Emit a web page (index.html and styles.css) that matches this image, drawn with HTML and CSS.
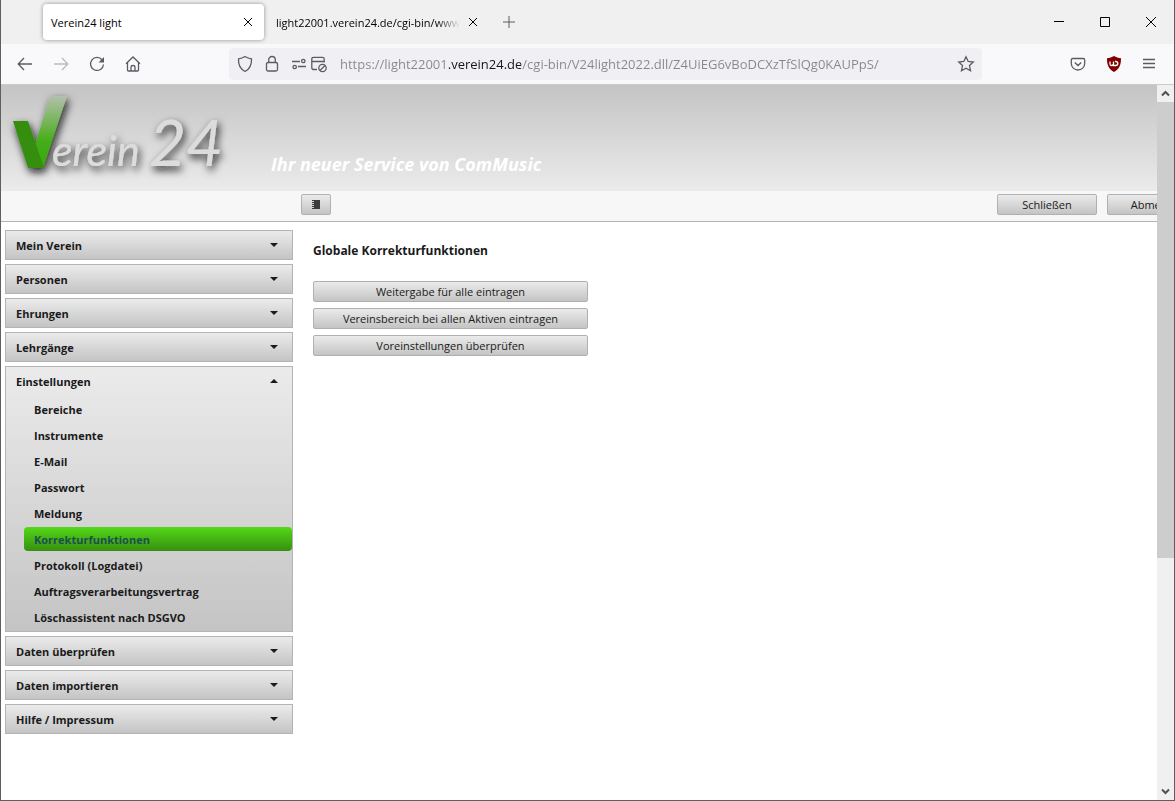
FILE: index.html
```
<!DOCTYPE html>
<html lang="de">
<head>
  <meta charset="UTF-8" />
  <meta name="viewport" content="width=device-width, initial-scale=1.0"/>
  <title>Verein24 light</title>
  <link rel="stylesheet" href="styles.css">
</head>
<body>
<div class="window">

  <div class="tabbar">
    <div class="tab active">
      <span class="tab-title">Verein24 light</span>
      <button class="tab-close" aria-label="Tab schließen"><svg width="10" height="10" viewBox="0 0 10 10"><path d="M1 1l8 8M9 1l-8 8"/></svg></button>
    </div>
    <div class="tab">
      <span class="tab-title fade">light22001.verein24.de/cgi-bin/www</span>
      <button class="tab-close" aria-label="Tab schließen"><svg width="10" height="10" viewBox="0 0 10 10"><path d="M1 1l8 8M9 1l-8 8"/></svg></button>
    </div>
    <button class="tab-new" aria-label="Neuer Tab"><svg width="12" height="12" viewBox="0 0 12 12"><path d="M6 0v12M0 6h12"/></svg></button>
    <div class="window-buttons">
      <button aria-label="Minimieren"><svg width="10" height="10" viewBox="0 0 10 10"><path d="M0 4.500h10"/></svg></button>
      <button aria-label="Maximieren"><svg width="10" height="10" viewBox="0 0 10 10"><path d="M.5.5h9v9h-9z"/></svg></button>
      <button aria-label="Fenster schließen"><svg width="10" height="10" viewBox="0 0 10 10"><path d="M0 0l10 10M10 0L0 10"/></svg></button>
    </div>
  </div>

  <div class="navbar">
    <div class="nav-buttons">
      <button aria-label="Zurück"><svg width="16" height="16" viewBox="0 0 16 16"><path d="M15 8H1.500M7 2L1.200 8 7 14"/></svg></button>
      <button aria-label="Vor" disabled><svg width="16" height="16" viewBox="0 0 16 16"><path d="M1 8h13.500M9 2l5.800 6L9 14"/></svg></button>
      <button aria-label="Neu laden"><svg width="16" height="16" viewBox="0 0 16 16"><path d="M13.200 4A6.500 6.500 0 1 0 14.500 8.500"/><path class="solid" d="M15 1v5.500H9.500z"/></svg></button>
      <button aria-label="Startseite"><svg width="16" height="16" viewBox="0 0 16 16"><path d="M1 7.800L8 1l7 6.800M2.500 6.500V14q0 1 1 1h9q1 0 1-1V6.500M6 15v-4q0-1.500 2-1.500t2 1.500v4"/></svg></button>
    </div>
    <div class="urlbar">
      <svg width="16" height="18" viewBox="0 0 16 18"><path d="M8 1.500C10 2.800 12.300 3.500 14.500 3.800 14.800 9.500 13 14 8 16.500 3 14 1.200 9.500 1.500 3.800 3.700 3.500 6 2.800 8 1.500z"/></svg>
      <svg width="14" height="18" viewBox="0 0 14 18"><rect x="1.500" y="7.500" width="11" height="8.500" rx="1.500"/><path d="M3.700 7.500V4.800a3.300 3.300 0 0 1 6.600 0v2.700"/></svg>
      <span class="url-pair">
        <svg width="16" height="16" viewBox="0 0 16 16"><path d="M1 5.500h8M7 10.500h8"/><circle cx="12.300" cy="5" r="1.700"/><circle cx="3.700" cy="11" r="1.700"/></svg>
        <svg width="18" height="18" viewBox="0 0 18 18"><path d="M7 14.500H3.500q-1.700 0-1.700-1.700V4q0-1.700 1.700-1.700h9q1.700 0 1.700 1.700v3.500M2 6.500h12"/><circle cx="12.500" cy="13" r="3.700"/><path d="M10 15.500l5-5"/></svg>
      </span>
      <input class="url" type="text" aria-label="Adresse" value="https://light22001.verein24.de/cgi-bin/V24light2022.dll/Z4UiEG6vBoDCXzTfSlQg0KAUPpS/">
      <button aria-label="Lesezeichen"><svg width="18" height="18" viewBox="0 0 18 18"><path d="M9 1.800l2.200 4.700 5.100.6-3.800 3.500 1 5.100L9 13.200l-4.500 2.500 1-5.100L1.700 7.100l5.100-.6z"/></svg></button>
    </div>
    <div class="nav-tools">
      <button aria-label="Pocket"><svg width="16" height="16" viewBox="0 0 16 16"><path d="M2.800 2.500h10.400q1.500 0 1.500 1.500v3.500a6.700 6.500 0 0 1-13.400 0V4q0-1.500 1.500-1.500zM4.800 6.500L8 9.500l3.200-3"/></svg></button>
      <button aria-label="uBlock Origin"><svg width="16" height="18" viewBox="0 0 16 18"><path class="shield" d="M8 1c2 1.300 4.500 2 7 2.200 0 6-1 10.300-7 13.800C2 13.500 1 9.200 1 3.200 3.500 3 6 2.300 8 1z"/><path class="shield-mark" d="M4 6.500V9q0 1.500 1.500 1.500T7.500 9V6.500M7.500 7v3.500h2q2.300 0 2.300-2t-2.300-2H9"/></svg></button>
      <button aria-label="Menü"><svg width="14" height="12" viewBox="0 0 14 12"><path d="M1 1.500h12M1 5.500h12M1 9.500h12"/></svg></button>
    </div>
  </div>

  <div class="viewport">
    <div class="page">
      <header class="banner">
        <svg class="logo" width="250" height="106" viewBox="0 0 250 106" role="img" aria-label="Verein 24">
          <defs>
            <linearGradient id="tick" x1="0" y1="0" x2="0" y2="1">
              <stop offset="0" stop-color="#b4bfae"/>
              <stop offset=".65" stop-color="#42ad14"/>
              <stop offset="1" stop-color="#3da60f"/>
            </linearGradient>
            <filter id="shadow" x="-20%" y="-20%" width="140%" height="150%">
              <feDropShadow dx="2" dy="4" stdDeviation="4" flood-color="#111" flood-opacity=".9"/>
            </filter>
          </defs>
          <g class="logo-parts" filter="url(#shadow)">
            <path fill="url(#tick)" d="M49 11h17L42 83H31L34 60z"/>
            <path fill="#348e0e" d="M12 36h15l16 47H27z"/>
            <text class="logo-text" x="51" y="81">erein</text>
            <text class="logo-number" x="148" y="81">24</text>
          </g>
        </svg>
        <p class="slogan">Ihr neuer Service von ComMusic</p>
      </header>

      <div class="toolbar">
        <button class="btn btn-icon" aria-label="Menü ein- und ausblenden"><svg width="10" height="10" viewBox="0 0 10 10"><path d="M3 0h6v9H3zM1 0h2v1H1zM1 2h2v1H1zM1 4h2v1H1zM1 6h2v1H1zM1 8h2v1H1z"/></svg></button>
        <div class="session">
          <button class="btn">Schließen</button>
          <button class="btn">Abmelden</button>
        </div>
      </div>

      <div class="content">
        <nav class="menu">
          <section class="panel"><button class="panel-head">Mein Verein</button></section>
          <section class="panel"><button class="panel-head">Personen</button></section>
          <section class="panel"><button class="panel-head">Ehrungen</button></section>
          <section class="panel"><button class="panel-head">Lehrgänge</button></section>
          <section class="panel open">
            <button class="panel-head">Einstellungen</button>
            <ul>
              <li><a href="#">Bereiche</a></li>
              <li><a href="#">Instrumente</a></li>
              <li><a href="#">E-Mail</a></li>
              <li><a href="#">Passwort</a></li>
              <li><a href="#">Meldung</a></li>
              <li><a href="#" class="selected">Korrekturfunktionen</a></li>
              <li><a href="#">Protokoll (Logdatei)</a></li>
              <li><a href="#">Auftragsverarbeitungsvertrag</a></li>
              <li><a href="#">Löschassistent nach DSGVO</a></li>
            </ul>
          </section>
          <section class="panel"><button class="panel-head">Daten überprüfen</button></section>
          <section class="panel"><button class="panel-head">Daten importieren</button></section>
          <section class="panel"><button class="panel-head">Hilfe / Impressum</button></section>
        </nav>

        <main>
          <h1>Globale Korrekturfunktionen</h1>
          <div class="actions">
            <button class="btn">Weitergabe für alle eintragen</button>
            <button class="btn">Vereinsbereich bei allen Aktiven eintragen</button>
            <button class="btn">Voreinstellungen überprüfen</button>
          </div>
        </main>
      </div>
    </div>

    <div class="scrollbar">
      <span class="arrow"><svg width="9" height="7" viewBox="0 0 9 7"><path d="M1 5.500l3.500-3.500L8 5.500"/></svg></span>
      <div class="track"><div class="thumb"></div></div>
      <span class="arrow"><svg width="9" height="7" viewBox="0 0 9 7"><path d="M1 1.500L4.500 5 8 1.500"/></svg></span>
    </div>
  </div>

</div>
</body>
</html>
```
FILE: styles.css
```
* {
  margin: 0;
  padding: 0;
  box-sizing: border-box;
}

body {
  font-family: 'Segoe UI', 'Open Sans', sans-serif;
  font-size: 11px;
  color: #1a1a1a;
}

button {
  font: inherit;
  color: inherit;
  background: none;
  border: none;
}

svg {
  display: block;
  flex: none;
  fill: none;
  stroke: #5b5b66;
}

.window {
  height: 100vh;
  display: flex;
  flex-direction: column;
  border: 1px solid #5f5f62;
  border-top: none;
  background: #fff;
}

/* tabs */

.tabbar {
  height: 44px;
  display: flex;
  align-items: center;
  gap: 4px;
  padding-left: 42px;
  background: #f0f0f0;
  color: #000;
}

.tab {
  width: 221px;
  height: 36px;
  display: flex;
  align-items: center;
  justify-content: space-between;
  padding: 0 7px 0 8px;
  border-radius: 4px;
}

.tab.active {
  background: #fff;
  box-shadow: 0 0 4px rgba(0, 0, 0, 0.4);
}

.tab-title {
  white-space: nowrap;
}

.tab-title.fade {
  mask-image: linear-gradient(to left, transparent, #000 24px);
}

.tab-close {
  padding: 4px;
}

.tab-close svg,
.window-buttons svg {
  stroke: #000;
}

.tab-new {
  padding: 8px 10px;
}

.window-buttons {
  display: flex;
  height: 100%;
  margin-left: auto;
}

.window-buttons button {
  width: 46px;
  display: flex;
  align-items: center;
  justify-content: center;
}

/* address bar */

.navbar {
  height: 41px;
  display: flex;
  align-items: center;
  background: #f9f9fb;
  border-bottom: 1px solid #ccc;
}

.navbar svg {
  stroke-width: 1.3;
}

.nav-buttons {
  display: flex;
  gap: 20px;
  width: 228px;
  padding-left: 16px;
}

.nav-buttons button:disabled {
  opacity: 0.4;
}

.nav-buttons .solid {
  fill: #5b5b66;
  stroke: none;
}

.urlbar {
  flex: 1;
  height: 32px;
  display: flex;
  align-items: center;
  gap: 12px;
  padding: 0 7px 0 8px;
  border-radius: 4px;
  background: #f0f0f4;
}

.url-pair {
  display: flex;
  align-items: center;
  gap: 3px;
}

.url {
  flex: 1;
  min-width: 0;
  border: none;
  outline: none;
  font: inherit;
  font-size: 13px;
  /* host name darker than the rest of the address */
  color: transparent;
  background: linear-gradient(to right, #86868c 109px, #15141a 109px, #15141a 181px, #86868c 181px);
  background-clip: text;
}

.nav-tools {
  width: 192px;
  display: flex;
  align-items: center;
  justify-content: flex-end;
  gap: 20px;
  padding-right: 18px;
}

.nav-tools .shield {
  fill: #800000;
  stroke: none;
}

.nav-tools .shield-mark {
  stroke: #fff;
}

/* page */

.viewport {
  flex: 1;
  min-height: 0;
  display: flex;
}

.page {
  flex: 1;
  min-width: 0;
  overflow: hidden;
}

.banner {
  height: 106px;
  display: flex;
  gap: 20px;
  background: linear-gradient(#c4c4c4, #ebebeb);
}

.slogan {
  align-self: flex-end;
  padding-bottom: 14px;
  font-size: 18px;
  line-height: 26px;
  font-weight: bold;
  font-style: italic;
  color: #fff;
}

.logo-parts {
  stroke: none;
}

.logo-text,
.logo-number {
  font-family: Lato, sans-serif;
  font-style: italic;
  fill: #dcdcdc;
}

.logo-text {
  font-size: 43px;
}

.logo-number {
  font-size: 64px;
}

.toolbar {
  height: 31px;
  display: flex;
  align-items: flex-start;
  justify-content: space-between;
  padding-top: 3px;
  padding-left: 300px;
  /* the bar is wider than the visible page */
  margin-right: -50px;
  background: #f7f7f7;
  border-bottom: 1px solid #b4b4b4;
}

.session {
  display: flex;
  gap: 10px;
}

.session .btn {
  width: 100px;
}

.btn {
  height: 21px;
  padding-top: 1px;
  line-height: 18px;
  border: 1px solid #b0b0b0;
  border-radius: 2px;
  background: linear-gradient(#ebebeb, #c4c4c4);
  text-align: center;
}

.btn-icon {
  width: 30px;
  display: flex;
  align-items: center;
  justify-content: center;
}

.btn-icon svg {
  fill: #3c3c3c;
  stroke: none;
}

.content {
  display: flex;
  gap: 20px;
  padding: 8px 4px;
}

.menu {
  width: 288px;
  display: flex;
  flex-direction: column;
  gap: 4px;
  font-weight: bold;
}

.panel {
  border: 1px solid #b4b4b4;
  background: linear-gradient(#ebebeb, #c4c4c4);
}

.panel-head {
  width: 100%;
  height: 28px;
  display: flex;
  align-items: center;
  justify-content: space-between;
  padding: 0 14px 0 10px;
}

.panel-head::after {
  content: "";
  border: 4px solid transparent;
  border-top-color: #1a1a1a;
  border-bottom: none;
}

.open .panel-head::after {
  border-top: none;
  border-bottom: 4px solid #1a1a1a;
}

.panel ul {
  list-style: none;
  padding: 2px 0 0 18px;
}

.panel li {
  padding-bottom: 2px;
}

.panel a {
  display: block;
  height: 24px;
  padding-left: 10px;
  line-height: 25px;
  border-radius: 4px;
  color: #1a1a1a;
  text-decoration: none;
}

.panel a.selected {
  background: linear-gradient(#54d819, #35900e);
  color: #1d4f4f;
}

main {
  padding-top: 11px;
}

h1 {
  font-size: 12px;
  line-height: 20px;
}

.actions {
  width: 275px;
  display: flex;
  flex-direction: column;
  gap: 6px;
  padding-top: 20px;
}

/* scrollbar */

.scrollbar {
  width: 17px;
  display: flex;
  flex-direction: column;
  background: #f0f0f0;
}

.arrow {
  height: 17px;
  display: flex;
  align-items: center;
  justify-content: center;
}

.arrow svg {
  stroke: #505050;
  stroke-width: 2;
}

.track {
  flex: 1;
}

.thumb {
  height: 67%;
  background: #cdcdcd;
}
```
